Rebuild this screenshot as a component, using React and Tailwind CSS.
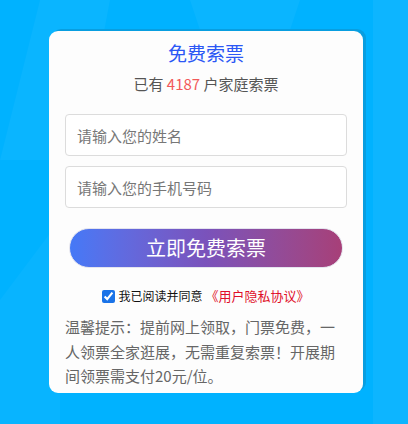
import React, { useState } from 'react';

const font = { fontFamily: '"Noto Sans CJK SC", "Noto Sans", sans-serif' };

const Backdrop = () => (
  <svg className="absolute inset-0 h-full w-full" viewBox="0 0 408 424" preserveAspectRatio="none">
    <rect width="408" height="424" fill="#00b2ff" />
    <polygon points="0,160 40,0 110,0 80,160" fill="#ffffff" opacity="0.04" />
    <polygon points="0,300 60,220 60,424 0,424" fill="#ffffff" opacity="0.03" />
    <polygon points="190,0 300,0 290,30 200,30" fill="#ffffff" opacity="0.04" />
    <rect x="373" y="0" width="35" height="424" fill="#ffffff" opacity="0.05" />
  </svg>
);

const App = () => {
  const [name, setName] = useState('');
  const [phone, setPhone] = useState('');
  const [agree, setAgree] = useState(true);

  return (
    <div className="relative w-[408px] h-[424px] overflow-hidden" style={font}>
      <Backdrop />
      <div className="relative pt-[31px] pl-[49px]">
        <div className="w-[314px] rounded-[9px] bg-[#fdfdfd] shadow-[3px_-2px_0_#089ee0] px-[16px] pt-[9px] pb-[4px]">
          <h1 className="text-center text-[19px] leading-[26px] text-[#2b57f5]">免费索票</h1>
          <p className="mt-[8px] text-center text-[15px] leading-[20px] text-[#555]">
            已有 <span className="text-[#f25a5a]">4187</span> 户家庭索票
          </p>

          <div className="mt-[20px] flex flex-col gap-[10px]">
            <input
              className="h-[42px] w-full rounded-[4px] border border-[#dcdcdc] bg-white px-[11px] text-[15px] text-[#555] placeholder:text-[#777] outline-none"
              placeholder="请输入您的姓名"
              value={name}
              onChange={e => setName(e.target.value)}
            />
            <input
              className="h-[42px] w-full rounded-[4px] border border-[#dcdcdc] bg-white px-[11px] text-[15px] text-[#555] placeholder:text-[#777] outline-none"
              placeholder="请输入您的手机号码"
              value={phone}
              onChange={e => setPhone(e.target.value)}
            />
          </div>

          <div className="mt-[20px] px-[4px]">
            <button
              type="button"
              className="h-[40px] w-full rounded-full border border-[#e4e4ee] bg-gradient-to-r from-[#4479f7] via-[#7a52bb] to-[#a73f78] text-[20px] text-white"
            >
              立即免费索票
            </button>
          </div>

          <label className="mt-[20px] flex items-center justify-center gap-[3px] text-[12px] leading-[16px] text-[#111]">
            <input
              type="checkbox"
              className="h-[13px] w-[13px] accent-[#1a73e8]"
              checked={agree}
              onChange={e => setAgree(e.target.checked)}
            />
            <span>我已阅读并同意</span>
            <span className="text-[13px] text-[#e0102a]">《用户隐私协议》</span>
          </label>

          <p className="mt-[11px] text-[15px] leading-[24.5px] text-[#666]">
            温馨提示：提前网上领取，门票免费，一人领票全家逛展，无需重复索票！开展期间领票需支付20元/位。
          </p>
        </div>
      </div>
    </div>
  );
};

export default App;
